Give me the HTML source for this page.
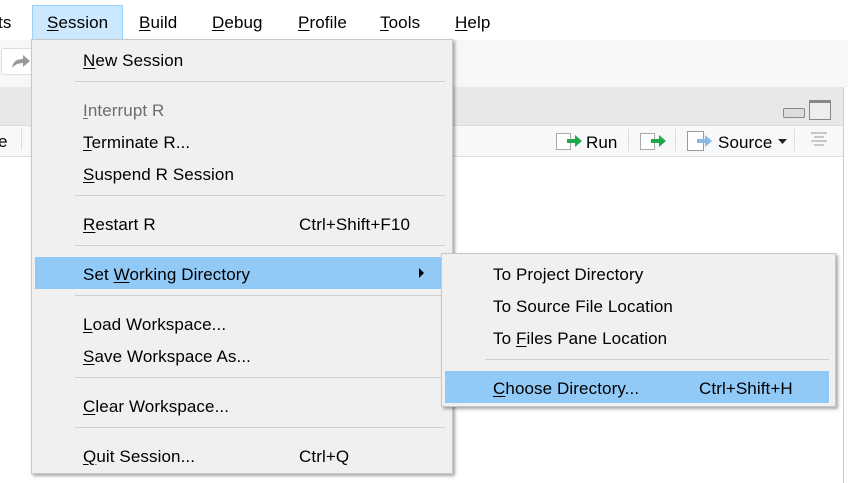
<!DOCTYPE html>
<html><head><style>
body{margin:0;width:848px;height:483px;overflow:hidden;background:#fff;font-family:"Segoe UI","Liberation Sans",sans-serif;font-size:17px;color:#000;position:relative}
.a{position:absolute}
.t{position:absolute;white-space:nowrap;line-height:20px;margin-top:1px;letter-spacing:0.1px}
u{text-decoration:underline;text-underline-offset:2px}
.sep{position:absolute;height:1px;background:#d0d0d0}
</style></head><body>
<div class="a" style="left:0;top:0;width:848px;height:40px;background:#fff"></div>
<div class="a" style="left:32px;top:5px;width:89px;height:33px;background:#cce8ff;border:1px solid #99d1ff"></div>
<div class="t" style="left:-2px;top:12px">ts</div>
<div class="t" style="left:47px;top:12px"><u>S</u>ession</div>
<div class="t" style="left:139px;top:12px"><u>B</u>uild</div>
<div class="t" style="left:212px;top:12px"><u>D</u>ebug</div>
<div class="t" style="left:298px;top:12px"><u>P</u>rofile</div>
<div class="t" style="left:380px;top:12px"><u>T</u>ools</div>
<div class="t" style="left:455px;top:12px"><u>H</u>elp</div>
<div class="a" style="left:0;top:40px;width:848px;height:47px;background:#f6f7f8"></div>
<div class="a" style="left:1px;top:48px;width:30px;height:25px;background:#fff;border:1px solid #ddd;border-radius:3px"></div>
<svg class="a" style="left:10px;top:52px" width="22" height="18"><path d="M2 16 Q3 7 13 7 V3 L20 9 L13 15 V11 Q6 11 2 16Z" fill="#999"/></svg>
<div class="a" style="left:0;top:87px;width:843px;height:38px;background:#e6e8ea;border-right:1px solid #ccc"></div>
<div class="a" style="left:783px;top:108px;width:20px;height:8px;border:1px solid #888;border-radius:2px;background:#ddd"></div>
<div class="a" style="left:809px;top:100px;width:20px;height:16px;border:1px solid #888;border-top-width:3px;background:#eee"></div>
<div class="a" style="left:0;top:125px;width:843px;height:30px;background:#f7f8f9;border-bottom:1px solid #ddd;border-right:1px solid #ccc;border-top:1px solid #ddd"></div>
<div class="a" style="left:843px;top:155px;width:1px;height:328px;background:#ccc"></div>
<div class="t" style="left:-2px;top:131px">e</div>
<div class="a" style="left:21px;top:128px;width:1px;height:22px;background:#ddd"></div>
<div class="a" style="left:556px;top:133px;width:13px;height:15px;border:1px solid #aaa;background:#fff"></div>
<svg class="a" style="left:567px;top:134px" width="16" height="14"><path d="M0 5H8V1L15 7L8 13V9H0Z" fill="#1fa84c"/></svg>
<div class="t" style="left:586px;top:132px">Run</div>
<div class="a" style="left:628px;top:129px;width:1px;height:22px;background:#ddd"></div>
<div class="a" style="left:640px;top:133px;width:13px;height:15px;border:1px solid #aaa;background:#fff"></div>
<svg class="a" style="left:651px;top:134px" width="16" height="14"><path d="M0 5H8V1L15 7L8 13V9H0Z" fill="#1fa84c"/></svg>
<div class="a" style="left:675px;top:129px;width:1px;height:22px;background:#ddd"></div>
<div class="a" style="left:687px;top:131px;width:15px;height:18px;border:1px solid #999;background:#fff"></div>
<svg class="a" style="left:697px;top:134px" width="16" height="14"><path d="M0 5H8V1L15 7L8 13V9H0Z" fill="#8ab9e6"/></svg>
<div class="t" style="left:718px;top:132px">Source</div>
<svg class="a" style="left:778px;top:139px" width="10" height="6"><path d="M0 0H9L4.5 5Z" fill="#222"/></svg>
<div class="a" style="left:794px;top:129px;width:1px;height:22px;background:#ddd"></div>
<svg class="a" style="left:810px;top:132px" width="18" height="14"><path d="M1 1H17M4 5H14M1 9H17M4 13H14" stroke="#999" stroke-width="1"/></svg>

<div class="a" style="left:31px;top:39px;width:420px;height:433px;background:#f0f0f0;border:1px solid #c8c8c8;box-shadow:2px 2px 3px rgba(0,0,0,.35)"></div>
<div class="t" style="left:83px;top:50px"><u>N</u>ew Session</div>
<div class="sep" style="left:75px;top:81px;width:370px"></div>
<div class="t" style="left:83px;top:100px;color:#6d6d6d"><u>I</u>nterrupt R</div>
<div class="t" style="left:83px;top:132px"><u>T</u>erminate R...</div>
<div class="t" style="left:83px;top:164px"><u>S</u>uspend R Session</div>
<div class="sep" style="left:75px;top:195px;width:370px"></div>
<div class="t" style="left:83px;top:214px"><u>R</u>estart R</div>
<div class="t" style="left:299px;top:214px">Ctrl+Shift+F10</div>
<div class="sep" style="left:75px;top:245px;width:370px"></div>
<div class="a" style="left:35px;top:257px;width:414px;height:32px;background:#91c9f7"></div>
<div class="t" style="left:83px;top:264px">Set <u>W</u>orking Directory</div>
<svg class="a" style="left:419px;top:268px" width="6" height="10"><path d="M0 0L5 5L0 10Z" fill="#000"/></svg>
<div class="sep" style="left:75px;top:295px;width:370px"></div>
<div class="t" style="left:83px;top:314px"><u>L</u>oad Workspace...</div>
<div class="t" style="left:83px;top:346px"><u>S</u>ave Workspace As...</div>
<div class="sep" style="left:75px;top:377px;width:370px"></div>
<div class="t" style="left:83px;top:396px"><u>C</u>lear Workspace...</div>
<div class="sep" style="left:75px;top:427px;width:370px"></div>
<div class="t" style="left:83px;top:446px"><u>Q</u>uit Session...</div>
<div class="t" style="left:299px;top:446px">Ctrl+Q</div>

<div class="a" style="left:441px;top:253px;width:393px;height:152px;background:#f0f0f0;border:1px solid #c8c8c8;box-shadow:2px 2px 3px rgba(0,0,0,.35)"></div>
<div class="t" style="left:493px;top:264px">To Project Directory</div>
<div class="t" style="left:493px;top:296px">To Source File Location</div>
<div class="t" style="left:493px;top:328px">To <u>F</u>iles Pane Location</div>
<div class="sep" style="left:485px;top:359px;width:344px"></div>
<div class="a" style="left:445px;top:371px;width:384px;height:32px;background:#91c9f7"></div>
<div class="t" style="left:493px;top:378px"><u>C</u>hoose Directory...</div>
<div class="t" style="left:699px;top:378px">Ctrl+Shift+H</div>
</body></html>
